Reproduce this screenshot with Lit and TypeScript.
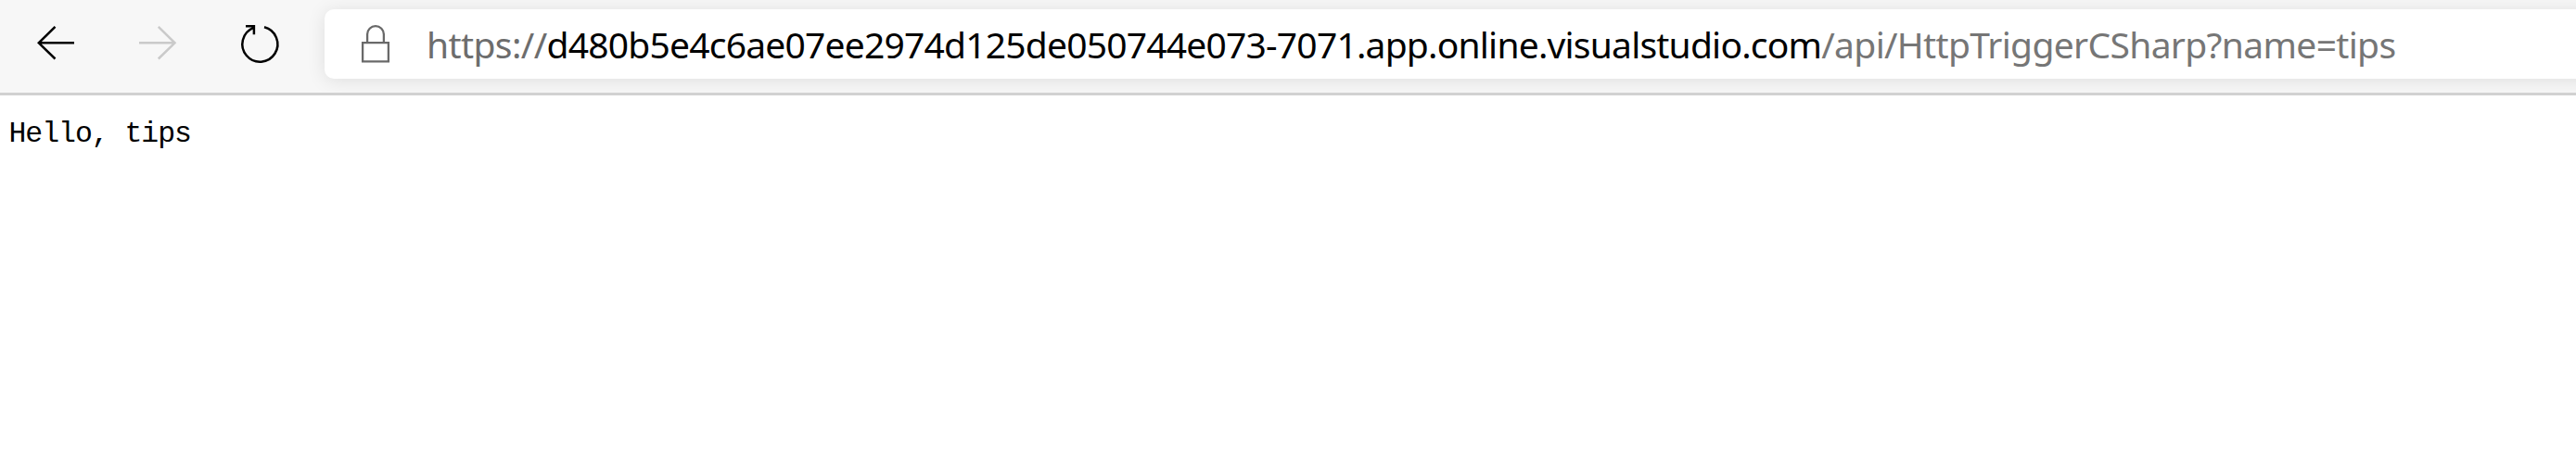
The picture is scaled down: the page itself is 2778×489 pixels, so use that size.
import { LitElement, html, css } from "lit";
import { customElement } from "lit/decorators.js";

@customElement("app-root")
export class AppRoot extends LitElement {
  static styles = css`
    :host { display: block; height: 489px; overflow: hidden; background: #fff; color: #000; }
    .toolbar { box-sizing: border-box; height: 103px; display: flex; align-items: flex-start; padding: 10px 0 0 40px; background: #f7f7f7; border-bottom: 3px solid #d1d1d1; overflow: hidden; }
    svg { display: block; flex: none; fill: none; overflow: visible; }
    .nav { display: flex; gap: 70px; padding-top: 17px; width: 310px; box-sizing: border-box; flex: none; }
    .address { flex: 1; min-width: 0; box-sizing: border-box; height: 75px; padding-left: 40px; display: flex; align-items: flex-start; background: #fff; border-radius: 10px 0 0 10px; box-shadow: 0 2px 20px rgba(0, 0, 0, 0.1); margin-right: -30px; }
    .lock { margin-top: 17px; }
    .url { margin-left: 40px; padding-top: 11px; display: flex; font: 39px/54px "Noto Sans", "Open Sans", sans-serif; white-space: pre; color: #767676; }
    .scheme { letter-spacing: -0.6px; color: #6d6d6d; }
    .host { color: #000; letter-spacing: -0.79px; }
    .path { letter-spacing: -0.67px; }
    pre { margin: 0; padding: 24px 0 0 9.5px; font: 31.5px/36px "Liberation Mono", monospace; letter-spacing: -1.05px; }
  `;

  render() {
    return html`
      <div class="toolbar">
        <div class="nav">
          <svg width="40" height="42" viewBox="0 0 40 42" stroke="#000" stroke-width="2.5"><path d="M40 19.3H1.5M19.5 1.8L1.8 19.3L19.5 36.5"/></svg>
          <svg width="40" height="42" viewBox="0 0 40 42" stroke="#cacaca" stroke-width="2.5"><path d="M0 19.3H38.5M20.8 1.8L38.5 19.3L20.8 36.5"/></svg>
          <svg width="40" height="42" viewBox="0 0 40 42" stroke="#000" stroke-width="2.5"><path d="M25 2.3A19 19 0 1 1 13 3.2M5 1.2H13.9V10.3"/></svg>
        </div>
        <div class="address">
          <svg class="lock" width="30" height="42" viewBox="0 0 30 42" stroke="#696969" stroke-width="2.3"><path d="M1.1 19.1H28.9V39.4H1.1ZM6.1 19V10A8.9 8.9 0 0 1 23.9 10V19"/></svg>
          <div class="url"><span class="scheme">https://</span><span class="host">d480b5e4c6ae07ee2974d125de050744e073-7071.app.online.visualstudio.com</span><span class="path">/api/HttpTriggerCSharp?name=tips</span></div>
        </div>
      </div>
      <pre>Hello, tips</pre>
    `;
  }
}
